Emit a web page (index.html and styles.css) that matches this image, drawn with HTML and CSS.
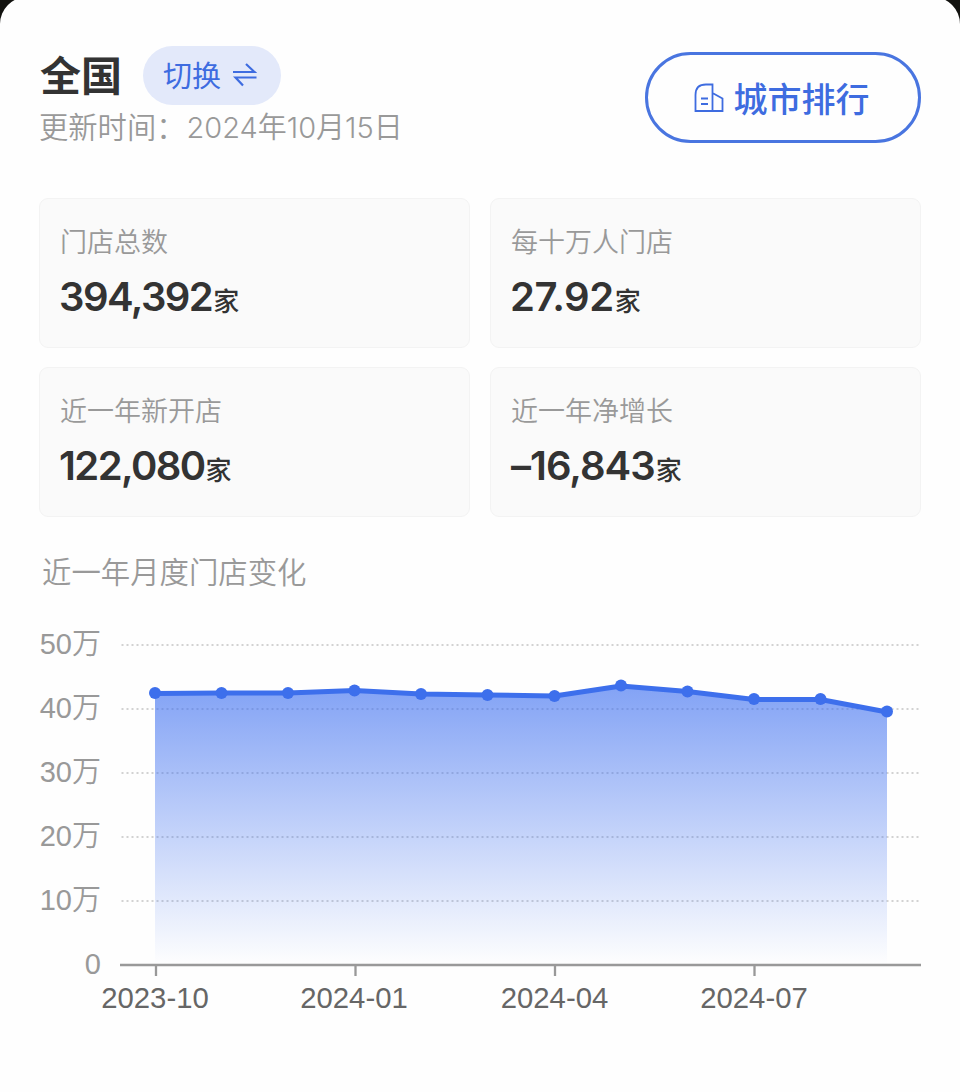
FILE: index.html
```html
<!DOCTYPE html>
<html lang="zh-CN">
  <head>
    <meta charset="UTF-8" />
    <meta name="viewport" content="width=device-width, initial-scale=1.0" />
    <title>全国门店数据</title>
    <link rel="stylesheet" href="styles.css">
  </head>
  <body>
    <div class="panel">
      <div class="header">
        <div class="area">
          <div class="area-row">
            <h1 class="area-name">全国</h1>
            <a class="switch" href="#">
              <span class="switch-text">切换</span>
              <svg class="switch-icon" viewBox="0 0 24 26" width="24" height="26">
                <path d="M0 10H21.500L13 2M23.500 15.500H2.500L10 23.500" />
              </svg>
            </a>
          </div>
          <p class="update">更新时间：<span class="date">2024年10月15日</span></p>
        </div>
        <a class="rank" href="#">
          <svg class="rank-icon" viewBox="0 0 30 30" width="30" height="30">
            <path d="M18.5 28H1.5V12Q1.5 1.5 12 1.5H18.5V28H28.5V15.5L18.5 10" />
            <path d="M7 15.5H14M7 21H14" />
          </svg>
          <span>城市排行</span>
        </a>
      </div>

      <ul class="stats">
        <li>
          <p class="label">门店总数</p>
          <p class="value"><span class="num n1">394,392</span>家</p>
        </li>
        <li>
          <p class="label">每十万人门店</p>
          <p class="value"><span class="num n2">27.92</span>家</p>
        </li>
        <li>
          <p class="label">近一年新开店</p>
          <p class="value"><span class="num n3">122,080</span>家</p>
        </li>
        <li>
          <p class="label">近一年净增长</p>
          <p class="value"><span class="num n4">–16,843</span>家</p>
        </li>
      </ul>

      <h2 class="chart-title">近一年月度门店变化</h2>
      <!-- monthly store count -->
      <svg class="chart" viewBox="0 0 882 400" width="882" height="400">
        <defs>
          <linearGradient id="fill" x1="0" y1="0" x2="0" y2="1">
            <stop offset="0" stop-color="#3d6ff0" stop-opacity="0.64" />
            <stop offset="1" stop-color="#3d6ff0" stop-opacity="0" />
          </linearGradient>
        </defs>
        <g class="grid">
          <path d="M82.500 25H882M82.500 89H882M82.500 153H882M82.500 217H882M82.500 281H882" />
        </g>
        <path class="fill" d="M116 73.5L182.5 73L249 73L315.5 70.5L382 74L448.5 75L515.5 76L582 66L648.5 71.5L715 79.5L781.5 79.5L848 92V345H116Z" />
        <path class="axis" d="M81 345H882M117 345V356M316.5 345V356M516 345V356M715.5 345V356" />
        <polyline class="line" points="116,73.5 182.5,73 249,73 315.5,70.5 382,74 448.5,75 515.5,76 582,66 648.5,71.5 715,79.5 781.5,79.5 848,92" />
        <g class="points">
          <circle cx="116" cy="73" r="6" />
          <circle cx="182.5" cy="73" r="6" />
          <circle cx="249" cy="73" r="6" />
          <circle cx="315.5" cy="70.5" r="6" />
          <circle cx="382" cy="74" r="6" />
          <circle cx="448.5" cy="75" r="6" />
          <circle cx="515.5" cy="76" r="6" />
          <circle cx="582" cy="65.5" r="6" />
          <circle cx="648.5" cy="71.5" r="6" />
          <circle cx="715" cy="79" r="6" />
          <circle cx="781.5" cy="79" r="6" />
          <circle cx="848" cy="91.5" r="6" />
        </g>
        <g class="y-text">
          <text x="62" y="34">50万</text>
          <text x="62" y="98">40万</text>
          <text x="62" y="162">30万</text>
          <text x="62" y="226">20万</text>
          <text x="62" y="290">10万</text>
          <text x="62" y="354">0</text>
        </g>
        <g class="x-text">
          <text x="116" y="388">2023-10</text>
          <text x="315" y="388">2024-01</text>
          <text x="515.5" y="388">2024-04</text>
          <text x="715" y="388">2024-07</text>
        </g>
      </svg>
    </div>
  </body>
</html>
```

FILE: styles.css
```css
* {
  margin: 0;
  padding: 0;
  box-sizing: border-box;
}
body {
  background-color: #12120f;
  font-family: "Liberation Sans", "Noto Sans CJK SC", sans-serif;
  overflow: hidden;
}
ul {
  list-style: none;
}
a {
  text-decoration: none;
}
.panel {
  width: 960px;
  height: 1095px;
  margin-top: -3px;
  padding: 49px 39px 0;
  border-radius: 27px 27px 0 0;
  background-color: #fefefe;
}

/* header */
.header {
  display: flex;
  justify-content: space-between;
  height: 152px;
}
.area-row {
  display: flex;
  align-items: center;
  height: 59px;
}
.area-name {
  width: 104px;
  padding: 3px 0 0 1px;
  font-size: 41px;
  font-weight: bold;
  line-height: 56px;
  color: #333;
}
.switch {
  display: flex;
  align-items: center;
  gap: 12px;
  width: 138px;
  height: 59px;
  padding-left: 20px;
  border-radius: 30px;
  background-color: #e3e9fa;
  color: #3e6ce0;
  font-size: 29px;
}
.switch-text {
  padding-bottom: 4px;
}
.switch-icon {
  margin-bottom: 2px;
}
.switch-icon,
.rank-icon {
  fill: none;
  stroke: #3e6ce0;
  stroke-width: 2.2;
}
.update {
  padding-top: 1px;
  font-size: 29.3px;
  font-weight: 350;
  line-height: 44px;
  color: #999;
  white-space: nowrap;
}
.date {
  margin-left: 1px;
  font-family: Inter, "Noto Sans CJK SC", sans-serif;
  font-size: 29px;
}
.rank {
  display: flex;
  align-items: center;
  justify-content: center;
  gap: 10px;
  width: 276px;
  height: 91px;
  margin-top: 6px;
  padding-right: 3px;
  border: 3px solid #4975e0;
  border-radius: 46px;
  color: #3e6ce0;
  font-size: 34px;
  font-weight: 500;
}
.rank-icon {
  stroke-width: 1.8;
}

/* stat cards */
.stats {
  display: grid;
  grid-template-columns: 431px 431px;
  grid-auto-rows: 150px;
  gap: 19px 20px;
}
.stats li {
  padding: 24px 20px 0;
  border: 1px solid #f3f3f3;
  border-radius: 9px;
  background-color: #fafafa;
}
.label {
  font-size: 27px;
  font-weight: 350;
  line-height: 40px;
  color: #999;
}
.value {
  display: flex;
  align-items: baseline;
  height: 60px;
  margin-top: 4px;
  font-size: 26px;
  font-weight: 500;
  line-height: 60px;
  color: #333;
}
.num {
  margin-right: 1px;
  font-family: Inter, sans-serif;
  font-size: 40px;
  font-weight: 600;
}
.n1 {
  margin-left: -1px;
  letter-spacing: -1.55px;
}
.n2 {
  margin-left: -1px;
  letter-spacing: -0.4px;
}
.n3 {
  margin-left: -1px;
  letter-spacing: -1.6px;
}
.n4 {
  letter-spacing: -1px;
}

/* chart */
.chart-title {
  margin: 34px 0 0 3px;
  font-size: 29.4px;
  font-weight: 350;
  line-height: 44px;
  color: #999;
}
.chart {
  display: block;
  margin-top: 25px;
}
.grid {
  fill: none;
  stroke: #d2d2d2;
  stroke-width: 2;
  stroke-dasharray: 2 3;
}
.fill {
  fill: url(#fill);
}
.axis {
  fill: none;
  stroke: #999;
  stroke-width: 2.3;
}
.line {
  fill: none;
  stroke: #3d6fec;
  stroke-width: 5;
  stroke-linejoin: round;
}
.points {
  fill: #3d6fec;
}
.y-text {
  font-size: 29px;
  font-weight: 350;
  text-anchor: end;
  fill: #999;
}
.x-text {
  font-size: 29.3px;
  text-anchor: middle;
  fill: #666;
}
```
